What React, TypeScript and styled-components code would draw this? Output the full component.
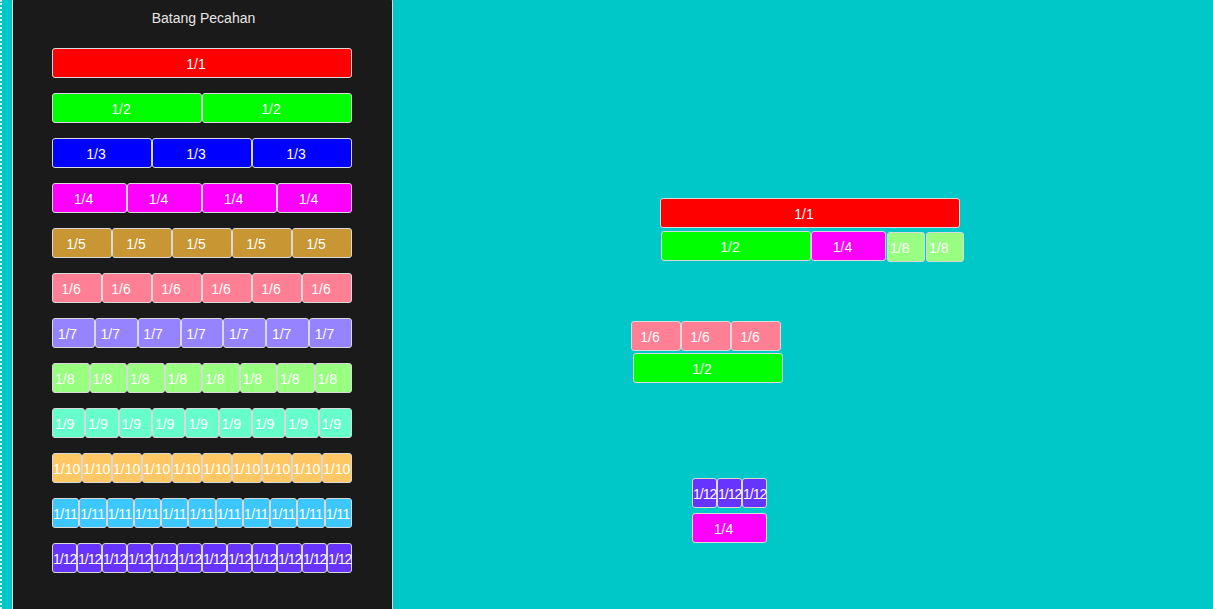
import React from "react";
import styled, { createGlobalStyle } from "styled-components";

const GlobalStyle = createGlobalStyle`
  html, body {
    margin: 0;
    padding: 0;
    height: 100%;
    overflow: hidden;
  }
  body {
    font-family: "Liberation Sans", Arial, sans-serif;
  }
  #root {
    height: 100%;
  }
`;

const COLORS: Record<number, string> = {
  1: "#ff0000",
  2: "#00ff00",
  3: "#0000ff",
  4: "#ff00ff",
  5: "#c89632",
  6: "#ff8094",
  7: "#9683ff",
  8: "#99ff80",
  9: "#66ffcc",
  10: "#ffc864",
  11: "#3cc8ff",
  12: "#6633ff",
};

const spacingFor = (n: number) => (n === 12 ? -1 : n === 11 ? -0.5 : 0);
const padFor = (n: number) => (n >= 9 ? 8 : 12);

const Page = styled.div`
  display: flex;
  height: 100vh;
  overflow: hidden;
  background: #00c8c8;
  border-left: 2px dotted rgba(255, 255, 255, 0.85);
  box-sizing: border-box;
`;

const Panel = styled.aside`
  flex: 0 0 381px;
  box-sizing: border-box;
  margin: -8px 0 0 10px;
  height: calc(100% + 8px);
  padding: 17px 1px 0 0;
  background: #1a1a1a;
  border: 1px solid #d9d9d9;
  border-bottom: none;
  border-radius: 10px 10px 0 0;
  display: flex;
  flex-direction: column;
  align-items: center;
  gap: 15px;
`;

const Title = styled.div`
  font-size: 14px;
  line-height: 16px;
  color: #e6e6e6;
  margin: 0 0 7px 3px;
`;

const Row = styled.div`
  display: flex;
  width: 300px;
  height: 30px;
`;

const Piece = styled.div<{ $n: number }>`
  box-sizing: border-box;
  min-width: 0;
  height: 30px;
  border: 1px solid #d9d9d9;
  border-radius: 3px;
  background: ${(p) => COLORS[p.$n]};
  color: #ffffff;
  font-family: "Liberation Sans", Arial, sans-serif;
  font-size: 14px;
  letter-spacing: ${(p) => spacingFor(p.$n)}px;
  line-height: 30px;
  text-align: center;
  padding-right: ${(p) => padFor(p.$n)}px;
  white-space: nowrap;
  user-select: none;
`;

const RowPiece = styled(Piece)`
  flex: 0 0 ${(p) => 100 / p.$n}%;
`;

const Canvas = styled.main`
  position: relative;
  flex: 1;
  height: 100%;
`;

const FreePiece = styled(Piece)<{ $x: number; $y: number }>`
  position: absolute;
  left: ${(p) => p.$x}px;
  top: ${(p) => p.$y}px;
  width: ${(p) => 300 / p.$n}px;
`;

const CANVAS_LEFT = 393;

const placed: { n: number; x: number; y: number }[] = [
  { n: 1, x: 660, y: 198 },
  { n: 2, x: 661, y: 231 },
  { n: 4, x: 811, y: 231 },
  { n: 8, x: 887, y: 232 },
  { n: 8, x: 926, y: 232 },
  { n: 6, x: 631, y: 321 },
  { n: 6, x: 681, y: 321 },
  { n: 6, x: 731, y: 321 },
  { n: 2, x: 633, y: 353 },
  { n: 12, x: 692, y: 478 },
  { n: 12, x: 717, y: 478 },
  { n: 12, x: 742, y: 478 },
  { n: 4, x: 692, y: 513 },
];

const denominators = [1, 2, 3, 4, 5, 6, 7, 8, 9, 10, 11, 12];

export default function App() {
  return (
    <>
      <GlobalStyle />
      <Page>
        <Panel>
          <Title>Batang Pecahan</Title>
          {denominators.map((n) => (
            <Row key={n}>
              {Array.from({ length: n }, (_, i) => (
                <RowPiece key={i} $n={n}>
                  1/{n}
                </RowPiece>
              ))}
            </Row>
          ))}
        </Panel>
        <Canvas>
          {placed.map((p, i) => (
            <FreePiece key={i} $n={p.n} $x={p.x - CANVAS_LEFT} $y={p.y}>
              1/{p.n}
            </FreePiece>
          ))}
        </Canvas>
      </Page>
    </>
  );
}
